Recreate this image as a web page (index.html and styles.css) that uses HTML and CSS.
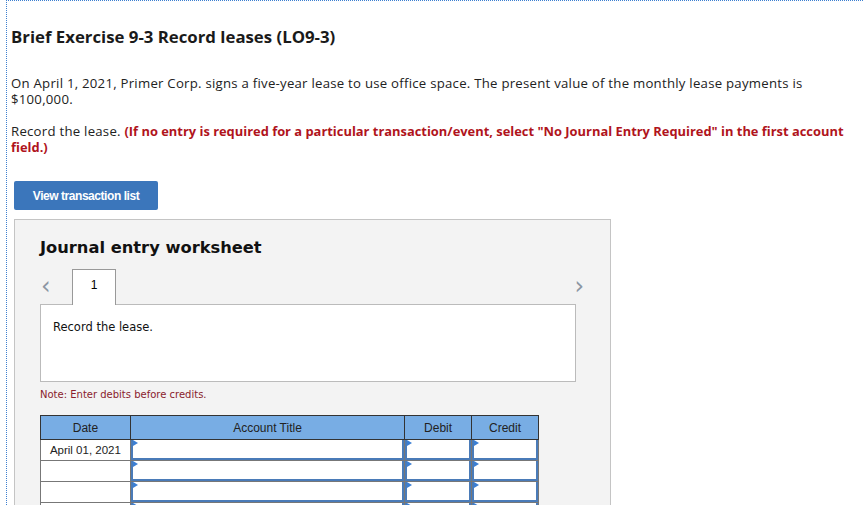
FILE: index.html
```html
<!DOCTYPE html>
<html>
<head>
<meta charset="utf-8">
<link rel="stylesheet" href="styles.css">
</head>
<body>
<div class="page">
  <h1 class="title">Brief Exercise 9-3 Record leases (LO9-3)</h1>
  <p class="text">On April 1, 2021, Primer Corp. signs a five-year lease to use office space. The present value of the monthly lease payments is $100,000.</p>
  <p class="text">Record the lease. <b class="warn">(If no entry is required for a particular transaction/event, select "No Journal Entry Required" in the first account field.)</b></p>
  <button class="btn">View transaction list</button>
  <div class="panel">
    <h2 class="ws-title">Journal entry worksheet</h2>
    <div class="tabs">
      <span class="arrow left">&lsaquo;</span>
      <span class="tab">1</span>
      <span class="spacer"></span>
      <span class="arrow right">&rsaquo;</span>
    </div>
    <div class="desc">Record the lease.</div>
    <div class="note">Note: Enter debits before credits.</div>
    <table class="journal">
      <thead>
        <tr><th class="c-date">Date</th><th class="c-acct">Account Title</th><th class="c-num">Debit</th><th class="c-num">Credit</th></tr>
      </thead>
      <tbody>
        <tr><td class="date">April 01, 2021</td><td><div class="inp"></div></td><td><div class="inp"></div></td><td><div class="inp"></div></td></tr>
        <tr><td class="date"></td><td><div class="inp"></div></td><td><div class="inp"></div></td><td><div class="inp"></div></td></tr>
        <tr><td class="date"></td><td><div class="inp"></div></td><td><div class="inp"></div></td><td><div class="inp"></div></td></tr>
        <tr><td class="date"></td><td><div class="inp"></div></td><td><div class="inp"></div></td><td><div class="inp"></div></td></tr>
      </tbody>
    </table>
  </div>
</div>
</body>
</html>
```
FILE: styles.css
```css
html, body {
  margin: 0;
  padding: 0;
  background: #fff;
  overflow: hidden;
}
.page {
  margin-left: 6px;
  border-top: 1px dotted #3d7fd0;
  border-left: 1px dotted #3d7fd0;
  padding: 0 0 0 4px;
  height: 504px;
  overflow: hidden;
  font-family: "Open Sans", "Liberation Sans", sans-serif;
  color: #222;
}
.title {
  margin: 25px 0 0 0;
  font-size: 16.8px;
  line-height: 22px;
  font-weight: 700;
  color: #1a1a1a;
}
.text {
  margin: 27px 0 0 0;
  font-size: 13.2px;
  letter-spacing: 0.25px;
  line-height: 16px;
  width: 845px;
}
.text + .text {
  margin-top: 16px;
}
.warn {
  color: #b0141c;
  font-weight: 700;
  font-size: 12.9px;
  letter-spacing: 0;
}
.btn {
  display: block;
  margin: 26px 0 0 3px;
  width: 144px;
  height: 29px;
  border: 0;
  border-radius: 2px;
  background: #3b76bb;
  color: #fff;
  font-family: "Liberation Sans", Arial, sans-serif;
  font-weight: 700;
  font-size: 12px;
  letter-spacing: -0.45px;
  padding: 0;
}
.panel {
  margin: 9px 0 0 3px;
  width: 597px;
  border: 1px solid #c4c4c4;
  background: #f3f3f3;
  padding: 0 0 0 25px;
  box-sizing: border-box;
  height: 330px;
  font-family: "DejaVu Sans", Verdana, sans-serif;
}
.ws-title {
  margin: 18px 0 0 0;
  font-size: 16.3px;
  line-height: 20px;
  font-weight: 700;
  color: #111;
}
.tabs {
  display: flex;
  align-items: flex-end;
  margin-top: 10px;
  width: 544px;
  height: 36px;
}
.arrow {
  font-family: "DejaVu Sans", sans-serif;
  font-size: 24px;
  color: #8c96a3;
  line-height: 36px;
  align-self: center;
}
.arrow.left {
  width: 32px;
  padding-left: 1px;
  box-sizing: border-box;
}
.tab {
  width: 44px;
  height: 36px;
  box-sizing: border-box;
  border: 1px solid #999;
  border-bottom: 0;
  background: #fff;
  text-align: center;
  font-family: "Liberation Sans", Arial, sans-serif;
  font-size: 12px;
  line-height: 30px;
  color: #000;
  position: relative;
  top: 1px;
}
.spacer { flex: 1; }
.desc {
  width: 536px;
  height: 78px;
  box-sizing: border-box;
  border: 1px solid #bbb;
  background: #fff;
  padding: 15px 0 0 12px;
  font-size: 11.5px;
  color: #111;
}
.note {
  margin-top: 7px;
  font-size: 10px;
  color: #8a1c2c;
}
.journal {
  margin-top: 15px;
  border-collapse: collapse;
  width: 499px;
  font-family: "Liberation Sans", Arial, sans-serif;
  font-size: 12px;
}
.journal th {
  background: #78ade4;
  border: 1px solid #333;
  height: 23px;
  font-weight: 400;
  color: #222;
  padding: 0;
}
.c-date { width: 89px; }
.c-acct { width: 274px; }
.c-num { width: 66px; }
.journal td {
  border: 1px solid #777;
  padding: 0;
  height: 20px;
  background: #fff;
  vertical-align: top;
}
.journal td.date {
  text-align: center;
  vertical-align: middle;
  color: #222;
  font-size: 11.5px;
}
.inp {
  position: relative;
  height: 18px;
  border-left: 2px solid #4a7bb8;
  border-right: 2px solid #4a7bb8;
  border-bottom: 2px solid #4a7bb8;
  background: #fff;
}
.inp::before {
  content: "";
  position: absolute;
  left: 0;
  top: 0;
  border-left: 5px solid #3b7fd4;
  border-top: 3px solid transparent;
  border-bottom: 3px solid transparent;
}
```
